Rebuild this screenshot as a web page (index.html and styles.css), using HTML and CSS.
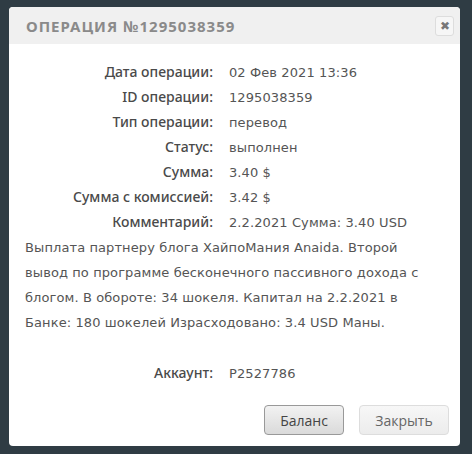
FILE: index.html
```html
<!DOCTYPE html>
<html lang="ru">
<head>
  <meta charset="UTF-8" />
  <title>Операция №1295038359</title>
  <link rel="stylesheet" href="styles.css">
</head>
<body>
  <div class="dialog">
    <div class="dialog-head">
      <span class="dialog-title">Операция №1295038359</span>
      <button class="close">&#10006;</button>
    </div>

    <div class="dialog-body">
      <div class="row"><span class="label">Дата операции:</span><span class="value">02 Фев 2021 13:36</span></div>
      <div class="row"><span class="label">ID операции:</span><span class="value">1295038359</span></div>
      <div class="row"><span class="label">Тип операции:</span><span class="value">перевод</span></div>
      <div class="row"><span class="label">Статус:</span><span class="value">выполнен</span></div>
      <div class="row"><span class="label">Сумма:</span><span class="value">3.40 $</span></div>
      <div class="row"><span class="label">Сумма с комиссией:</span><span class="value">3.42 $</span></div>
      <div class="row"><span class="label">Комментарий:</span><span class="value">2.2.2021 Сумма: 3.40 USD Выплата партнеру блога ХайпоМания Anaida. Второй вывод по программе бесконечного пассивного дохода с блогом. В обороте: 34 шокеля. Капитал на 2.2.2021 в Банке: 180 шокелей Израсходовано: 3.4 USD Маны.</span></div>
      <div class="row spaced"><span class="label">Аккаунт:</span><span class="value">P2527786</span></div>
    </div>

    <div class="dialog-foot">
      <button class="btn btn-main">Баланс</button>
      <button class="btn">Закрыть</button>
    </div>
  </div>
</body>
</html>
```

FILE: styles.css
```css
body {
  margin: 0;
  padding: 7px 12px 9px 9px;
  background-color: #2f3c44;
  font-family: "Noto Sans", Arial, sans-serif;
}
.dialog {
  background: #fff;
  border-radius: 4px;
  overflow: hidden;
}
.dialog-head {
  height: 37px;
  padding: 0 6px 0 17px;
  background: #f0f0f0;
  display: flex;
  align-items: center;
  justify-content: space-between;
}
.dialog-title {
  color: #8a8a8a;
  font-size: 15px;
  font-weight: bold;
  letter-spacing: 1px;
  text-transform: uppercase;
}
.close {
  width: 19px;
  height: 20px;
  padding: 0;
  border: 1px solid #ddd;
  border-radius: 3px;
  background: #f6f6f6;
  color: #777;
  font-size: 12px;
  line-height: 18px;
}
.dialog-body {
  padding: 15px 16px 0 16px;
  font-size: 14px;
  line-height: 25px;
  color: #555;
}
.label {
  display: inline-block;
  width: 188px;
  margin-right: 16px;
  text-align: right;
  color: #4a4a4a;
  font-weight: 500;
}
.value {
  font-family: "DejaVu Sans", sans-serif;
  font-size: 13px;
  line-height: 18px;
  letter-spacing: 0.1px;
}
.spaced {
  margin-top: 26px;
}
.dialog-foot {
  display: flex;
  justify-content: flex-end;
  gap: 15px;
  padding: 20px 11px 11px 0;
}
.btn {
  height: 30px;
  padding: 0 14px;
  border: 1px solid #ddd;
  border-radius: 4px;
  background: linear-gradient(#f7f7f7, #ececec);
  color: #666;
  font-family: "Open Sans", Arial, sans-serif;
  font-size: 14px;
}
.btn-main {
  min-width: 80px;
  border-color: #999;
  background: linear-gradient(#f2f2f2, #dadada);
  color: #444;
}
.btn + .btn {
  min-width: 90px;
}
```
